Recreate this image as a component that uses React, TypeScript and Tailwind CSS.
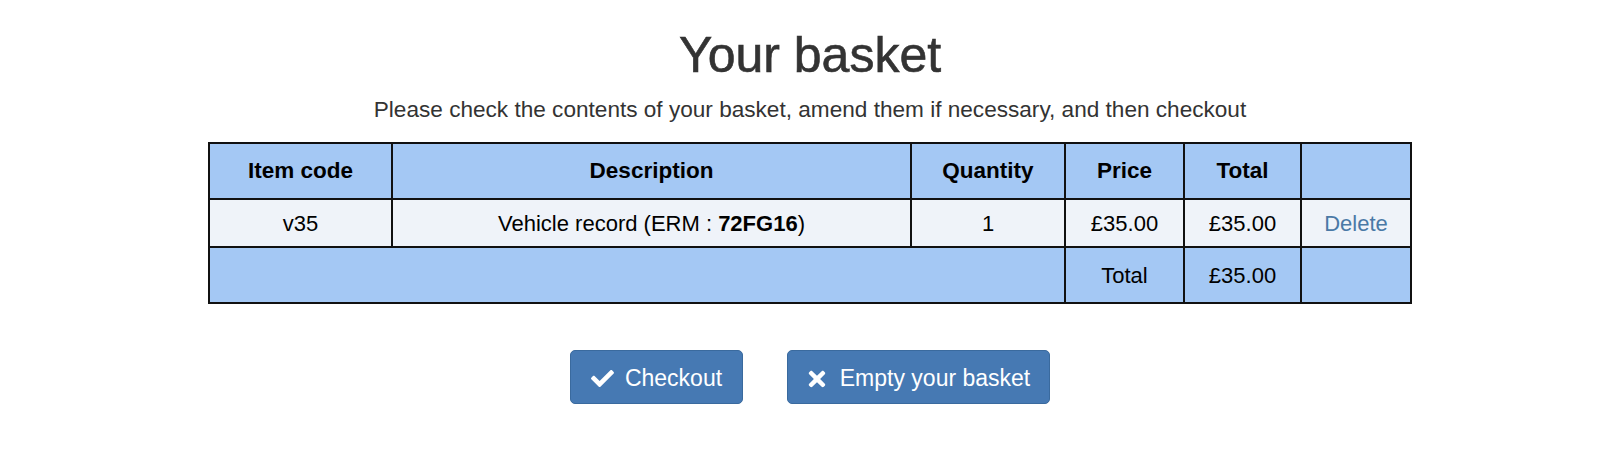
import React from 'react'
import { FaCheck, FaTimes } from 'react-icons/fa'

const App = () => {
  return (
    <div className="w-full bg-white pl-[20px] text-[#333]" style={{ fontFamily: '"Liberation Sans", Arial, sans-serif' }}>
      <div className="flex flex-col items-center">
        <h1 className="mt-[28px] text-[50px] leading-[55px] font-normal text-[#333] [-webkit-text-stroke:0.6px_#333]">Your basket</h1>
        <p className="mt-[10px] text-[22.6px] leading-[33px] text-[#333]">
          Please check the contents of your basket, amend them if necessary, and then checkout
        </p>

        <table className="mt-[16px] w-[1202px] table-fixed border-collapse border-2 border-[#111] text-[22px] text-black">
          <colgroup>
            <col className="w-[183px]" />
            <col className="w-[519px]" />
            <col className="w-[154px]" />
            <col className="w-[119px]" />
            <col className="w-[117px]" />
            <col className="w-[110px]" />
          </colgroup>
          <thead>
            <tr className="h-[56px] bg-[#a4c8f4]">
              <th className="border-2 border-[#111] text-[22.5px] font-bold">Item code</th>
              <th className="border-2 border-[#111] text-[22.5px] font-bold">Description</th>
              <th className="border-2 border-[#111] text-[22.5px] font-bold">Quantity</th>
              <th className="border-2 border-[#111] text-[22.5px] font-bold">Price</th>
              <th className="border-2 border-[#111] text-[22.5px] font-bold">Total</th>
              <th className="border-2 border-[#111]"></th>
            </tr>
          </thead>
          <tbody>
            <tr className="h-[48px] bg-[#eff3f9] text-center">
              <td className="border-2 border-[#111]">v35</td>
              <td className="border-2 border-[#111]">
                Vehicle record (ERM : <strong className="font-bold">72FG16</strong>)
              </td>
              <td className="border-2 border-[#111]">1</td>
              <td className="border-2 border-[#111]">£35.00</td>
              <td className="border-2 border-[#111]">£35.00</td>
              <td className="border-2 border-[#111]">
                <a className="text-[#4a79a6]">Delete</a>
              </td>
            </tr>
          </tbody>
          <tfoot>
            <tr className="h-[56px] bg-[#a4c8f4] text-center">
              <td colSpan={3} className="border-2 border-[#111]"></td>
              <td className="border-2 border-[#111]">Total</td>
              <td className="border-2 border-[#111]">£35.00</td>
              <td className="border-2 border-[#111]"></td>
            </tr>
          </tfoot>
        </table>

        <div className="mt-[46px] flex gap-[44px]">
          <button className="flex h-[54px] w-[173px] items-center justify-center gap-[11px] rounded-[5px] border border-[#3a6a9e] bg-[#4679b3] pt-[3px] text-[23px] text-white">
            <FaCheck className="h-[23px] w-[23px]" />
            Checkout
          </button>
          <button className="flex h-[54px] w-[263px] items-center justify-center gap-[13px] rounded-[5px] border border-[#3a6a9e] bg-[#4679b3] pt-[3px] text-[23px] text-white">
            <FaTimes className="h-[24px] w-[20px]" />
            Empty your basket
          </button>
        </div>
        <div className="h-[59px]" />
      </div>
    </div>
  )
}

export default App
